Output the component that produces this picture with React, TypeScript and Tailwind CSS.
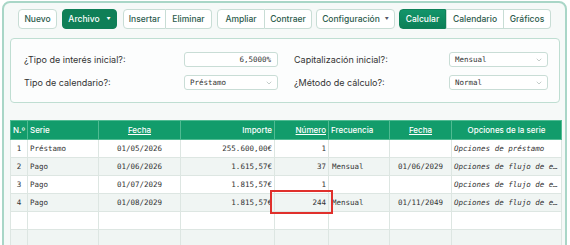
import React from 'react';
import { ChevronDown } from 'lucide-react';

const mono = "font-['DejaVu_Sans_Mono','Liberation_Mono',monospace]";

interface Row {
  n: number;
  serie: string;
  fecha: string;
  importe: string;
  numero: string;
  frecuencia: string;
  fecha2: string;
  opciones: string;
}

const rows: Row[] = [
  { n: 1, serie: 'Préstamo', fecha: '01/05/2026', importe: '255.600,00€', numero: '1', frecuencia: '', fecha2: '', opciones: 'Opciones de préstamo' },
  { n: 2, serie: 'Pago', fecha: '01/06/2026', importe: '1.615,57€', numero: '37', frecuencia: 'Mensual', fecha2: '01/06/2029', opciones: 'Opciones de flujo de e…' },
  { n: 3, serie: 'Pago', fecha: '01/07/2029', importe: '1.815,57€', numero: '1', frecuencia: '', fecha2: '', opciones: 'Opciones de flujo de e…' },
  { n: 4, serie: 'Pago', fecha: '01/08/2029', importe: '1.815,57€', numero: '244', frecuencia: 'Mensual', fecha2: '01/11/2049', opciones: 'Opciones de flujo de e…' },
];

function Btn({ children, className = '' }: { children: React.ReactNode; className?: string }) {
  return (
    <button
      type="button"
      className={`h-[20px] flex items-center justify-center gap-[5px] text-[8.5px] font-medium text-[#2b5a4c] bg-white border border-[#c8ddd5] ${className}`}
    >
      {children}
    </button>
  );
}

function Select({ value, width }: { value: string; width: string }) {
  return (
    <div className={`${width} h-[15px] flex items-center justify-between pl-[5px] pr-[4px] bg-white border border-[#c9ddd6] rounded-[3px]`}>
      <span className={`${mono} text-[7.5px] text-[#333]`}>{value}</span>
      <ChevronDown size={8} strokeWidth={1.5} className="text-[#8a9a95]" />
    </div>
  );
}

export default function App() {
  const cell = 'h-[18px] border border-[#dde6e2] px-[2px] whitespace-nowrap overflow-hidden';
  const head = 'h-[19px] border border-[#4fbb92] px-[2px] font-medium text-white whitespace-nowrap';

  return (
    <div className="w-[570px] h-[245px] overflow-hidden bg-white font-['Inter','Liberation_Sans',sans-serif]">
      <div className="mt-[1px] ml-[2px] w-[565px] h-[260px] border-2 border-[#a9d6c7] rounded-[8px] bg-[#f6f9f8] pt-[6px] px-[6px]">
        {/* toolbar */}
        <div className="flex items-center pl-[8px]">
          <Btn className="w-[39px] rounded-[4px]">Nuevo</Btn>
          <button
            type="button"
            className="ml-[5px] w-[55px] h-[20px] flex items-center justify-center gap-[7px] text-[8.5px] font-medium text-white bg-[#0f7f57] border border-[#0f7f57] rounded-[4px]"
          >
            Archivo <span className="text-[4px]">▼</span>
          </button>
          <div className="ml-[6px] flex">
            <Btn className="w-[43px] rounded-l-[4px]">Insertar</Btn>
            <Btn className="w-[46px] rounded-r-[4px] border-l-0">Eliminar</Btn>
          </div>
          <div className="ml-[5px] flex">
            <Btn className="w-[48px] rounded-l-[4px]">Ampliar</Btn>
            <Btn className="w-[47px] rounded-r-[4px] border-l-0">Contraer</Btn>
          </div>
          <Btn className="ml-[4px] w-[79px] rounded-[4px]">
            Configuración <span className="text-[4px] text-[#556]">▼</span>
          </Btn>
          <div className="ml-[4px] flex">
            <button
              type="button"
              className="w-[47px] h-[20px] text-[8.5px] font-medium text-white bg-gradient-to-b from-[#13956a] to-[#0c7f57] border border-[#0f8159] rounded-l-[4px]"
            >
              Calcular
            </button>
            <Btn className="w-[58px]">Calendario</Btn>
            <Btn className="w-[47px] rounded-r-[4px] border-l-0">Gráficos</Btn>
          </div>
        </div>

        {/* form */}
        <div className="mt-[9px] w-[550px] h-[65px] border border-[#bfded2] rounded-[4px] bg-[#fcfdfd] pt-[13px] pl-[13px] pr-[11px]">
          <div className="grid grid-cols-2 gap-x-[16px] gap-y-[8px] text-[9px] text-[#333]">
            <div className="flex items-center justify-between">
              <span>¿Tipo de interés inicial?:</span>
              <div className="w-[94px] h-[15px] flex items-center justify-end pr-[6px] bg-white border border-[#c9ddd6] rounded-[3px]">
                <span className={`${mono} text-[7.5px] text-[#333]`}>6,5000%</span>
              </div>
            </div>
            <div className="flex items-center justify-between">
              <span>Capitalización inicial?:</span>
              <Select value="Mensual" width="w-[99px]" />
            </div>
            <div className="flex items-center justify-between">
              <span>Tipo de calendario?:</span>
              <Select value="Préstamo" width="w-[94px]" />
            </div>
            <div className="flex items-center justify-between">
              <span>¿Método de cálculo?:</span>
              <Select value="Normal" width="w-[99px]" />
            </div>
          </div>
        </div>

        {/* table */}
        <div className="relative mt-[17px] w-[551px]">
          <table className="w-full table-fixed border-collapse text-[8px]">
            <colgroup>
              <col className="w-[17px]" />
              <col className="w-[71px]" />
              <col className="w-[82px]" />
              <col className="w-[94px]" />
              <col className="w-[54px]" />
              <col className="w-[61px]" />
              <col className="w-[62px]" />
              <col className="w-[110px]" />
            </colgroup>
            <thead>
              <tr className="bg-[#129c6b]">
                <th className={`${head} text-left`}>N.º</th>
                <th className={`${head} text-left`}>Serie</th>
                <th className={`${head} text-center underline`}>Fecha</th>
                <th className={`${head} text-right`}>Importe</th>
                <th className={`${head} text-right underline`}>Número</th>
                <th className={`${head} text-left`}>Frecuencia</th>
                <th className={`${head} text-center underline`}>Fecha</th>
                <th className={`${head} text-center`}>Opciones de la serie</th>
              </tr>
            </thead>
            <tbody className={`${mono} text-[7.5px] text-[#333]`}>
              {rows.map((r, i) => (
                <tr key={r.n} className={i % 2 === 1 ? 'bg-[#f0f5f3]' : 'bg-white'}>
                  <td className={`${cell} text-center`}>{r.n}</td>
                  <td className={cell}>{r.serie}</td>
                  <td className={`${cell} text-center`}>{r.fecha}</td>
                  <td className={`${cell} text-right`}>{r.importe}</td>
                  <td className={`${cell} text-right`}>{r.numero}</td>
                  <td className={`${cell} pl-[3px]`}>{r.frecuencia}</td>
                  <td className={`${cell} text-center`}>{r.fecha2}</td>
                  <td className={`${cell} italic`}>{r.opciones}</td>
                </tr>
              ))}
              {[0, 1].map((k) => (
                <tr key={`e${k}`} className={k === 1 ? 'bg-[#f0f5f3]' : 'bg-white'}>
                  {Array.from({ length: 8 }).map((_, c) => (
                    <td key={c} className={cell}></td>
                  ))}
                </tr>
              ))}
            </tbody>
          </table>
          <div className="absolute left-[260px] top-[70px] w-[63px] h-[24px] border-2 border-[#e0302c]" />
        </div>
      </div>
    </div>
  );
}
